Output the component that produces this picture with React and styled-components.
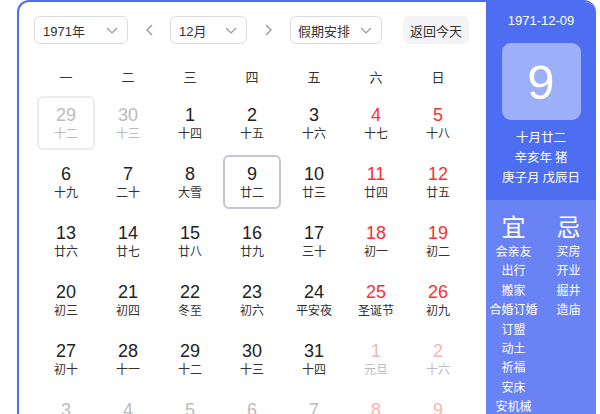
import React from "react";
import styled, { createGlobalStyle } from "styled-components";

const GlobalStyle = createGlobalStyle`
  html, body {
    margin: 0;
    padding: 0;
    background: #fff;
    overflow: hidden;
  }
  body {
    font-family: "Liberation Sans", Arial, "Noto Sans CJK SC", sans-serif;
  }
`;

const blue = "#4e6ef2";
const red = "#f73131";

const Page = styled.div`
  padding-left: 17px;
`;

const Card = styled.div`
  box-sizing: border-box;
  width: 579px;
  height: 440px;
  border: 2px solid ${blue};
  border-right: 0;
  border-radius: 12px 12px 0 0;
  overflow: hidden;
  display: flex;
`;

const Main = styled.div`
  flex: 1;
  padding: 14px 17px 0 16px;
`;

const Toolbar = styled.div`
  display: flex;
  align-items: center;
  height: 28px;
  margin-left: -1px;
`;

const Select = styled.div`
  box-sizing: border-box;
  width: ${(p) => p.$w}px;
  height: 28px;
  border: 1px solid #d9dbe2;
  border-radius: 6px;
  display: flex;
  align-items: center;
  justify-content: space-between;
  padding: 0 9px 0 ${(p) => p.$pl || 8}px;
  font-size: 13px;
  color: #333;
  font-family: "Liberation Sans", "Noto Sans CJK SC", sans-serif;
`;

const Nav = styled.div`
  width: ${(p) => p.$w}px;
  display: flex;
  justify-content: center;
  align-items: center;
`;

const TodayButton = styled.div`
  margin-left: auto;
  height: 28px;
  width: 66px;
  border-radius: 6px;
  background: #f3f4f6;
  display: flex;
  align-items: center;
  justify-content: center;
  font-size: 13px;
  color: #333;
  font-family: "Noto Sans CJK SC", sans-serif;
`;

const WeekHeader = styled.div`
  display: grid;
  grid-template-columns: repeat(7, 62px);
  margin: 23px 0 9px;
  line-height: 20px;
  font-size: 13px;
  color: #333;
  text-align: center;
  font-family: "Noto Sans CJK SC", sans-serif;
`;

const Grid = styled.div`
  display: grid;
  grid-template-columns: repeat(7, 62px);
  grid-auto-rows: 54px;
  row-gap: 5px;
`;

const Cell = styled.div`
  box-sizing: border-box;
  width: 58px;
  height: 54px;
  justify-self: center;
  border-radius: 6px;
  border: 2px solid
    ${(p) => (p.$mode === "selected" ? "#c3c6d0" : p.$mode === "hover" ? "#ececee" : "transparent")};
  display: flex;
  flex-direction: column;
  align-items: center;
  padding-top: 7px;
`;

const Day = styled.div`
  font-size: 18px;
  line-height: 20px;
  color: ${(p) => p.$color};
  font-family: "Liberation Sans", Arial, sans-serif;
`;

const Lunar = styled.div`
  font-size: 12px;
  line-height: 16px;
  color: ${(p) => p.$color};
  font-family: "Noto Sans CJK SC", sans-serif;
`;

const Panel = styled.div`
  width: 110px;
  display: flex;
  flex-direction: column;
  color: #fff;
  font-family: "Noto Sans CJK SC", sans-serif;
`;

const PanelTop = styled.div`
  height: 198px;
  background: ${blue};
  display: flex;
  flex-direction: column;
  align-items: center;
  padding-top: 10px;
  box-sizing: border-box;
`;

const DateText = styled.div`
  font-size: 13px;
  line-height: 17px;
  font-family: "Liberation Sans", Arial, sans-serif;
`;

const BigDay = styled.div`
  margin-top: 14px;
  width: 79px;
  height: 77px;
  border-radius: 9px;
  background: rgba(255, 255, 255, 0.45);
  display: flex;
  align-items: center;
  justify-content: center;
  font-size: 49px;
  font-family: "Liberation Sans", Arial, sans-serif;
`;

const LunarInfo = styled.div`
  margin-top: 7px;
  font-size: 12.5px;
  line-height: 20px;
  text-align: center;
`;

const PanelBottom = styled.div`
  flex: 1;
  background: #6a83f4;
  display: flex;
  padding-top: 11px;
`;

const Column = styled.div`
  width: 55px;
  display: flex;
  flex-direction: column;
  align-items: center;
`;

const ColumnTitle = styled.div`
  font-size: 24px;
  line-height: 30px;
`;

const Item = styled.div`
  font-size: 12px;
  line-height: 19.4px;
  white-space: nowrap;
`;

const ChevronDown = () => (
  <svg width="12" height="7" viewBox="0 0 12 7">
    <polyline points="1,1 6,6 11,1" fill="none" stroke="#999" strokeWidth="1.2" />
  </svg>
);

const Arrow = ({ dir }) => (
  <svg width="8" height="12" viewBox="0 0 8 12">
    <polyline
      points={dir === "left" ? "7,1 2,6 7,11" : "1,1 6,6 1,11"}
      fill="none"
      stroke="#999"
      strokeWidth="1.4"
    />
  </svg>
);

const weekdays = ["一", "二", "三", "四", "五", "六", "日"];

// [day, lunar, otherMonth, mode]
const days = [
  [29, "十二", true, "hover"], [30, "十三", true], [1, "十四"], [2, "十五"], [3, "十六"], [4, "十七"], [5, "十八"],
  [6, "十九"], [7, "二十"], [8, "大雪"], [9, "廿二", false, "selected"], [10, "廿三"], [11, "廿四"], [12, "廿五"],
  [13, "廿六"], [14, "廿七"], [15, "廿八"], [16, "廿九"], [17, "三十"], [18, "初一"], [19, "初二"],
  [20, "初三"], [21, "初四"], [22, "冬至"], [23, "初六"], [24, "平安夜"], [25, "圣诞节"], [26, "初九"],
  [27, "初十"], [28, "十一"], [29, "十二"], [30, "十三"], [31, "十四"], [1, "元旦", true], [2, "十六", true],
  [3, "十七", true], [4, "十八", true], [5, "十九", true], [6, "小寒", true], [7, "廿一", true], [8, "廿二", true], [9, "廿三", true],
];

const good = ["会亲友", "出行", "搬家", "合婚订婚", "订盟", "动土", "祈福", "安床", "安机械"];
const bad = ["买房", "开业", "掘井", "造庙"];

const dayColor = (weekend, other) => {
  if (other) return weekend ? "#f8b4b4" : "#bbbbbb";
  return weekend ? red : "#222";
};

export default function App() {
  return (
    <Page>
      <GlobalStyle />
      <Card>
        <Main>
          <Toolbar>
            <Select $w={94}>
              1971年
              <ChevronDown />
            </Select>
            <Nav $w={42}>
              <Arrow dir="left" />
            </Nav>
            <Select $w={77}>
              12月
              <ChevronDown />
            </Select>
            <Nav $w={43}>
              <Arrow dir="right" />
            </Nav>
            <Select $w={92} $pl={7}>
              假期安排
              <ChevronDown />
            </Select>
            <TodayButton>返回今天</TodayButton>
          </Toolbar>
          <WeekHeader>
            {weekdays.map((w) => (
              <div key={w}>{w}</div>
            ))}
          </WeekHeader>
          <Grid>
            {days.map(([d, l, other, mode], i) => {
              const weekend = i % 7 >= 5;
              return (
                <Cell key={i} $mode={mode}>
                  <Day $color={dayColor(weekend, other)}>{d}</Day>
                  <Lunar $color={other ? "#bbbbbb" : "#333"}>{l}</Lunar>
                </Cell>
              );
            })}
          </Grid>
        </Main>
        <Panel>
          <PanelTop>
            <DateText>1971-12-09</DateText>
            <BigDay>9</BigDay>
            <LunarInfo>
              <div>十月廿二</div>
              <div>辛亥年 猪</div>
              <div>庚子月 戊辰日</div>
            </LunarInfo>
          </PanelTop>
          <PanelBottom>
            <Column>
              <ColumnTitle>宜</ColumnTitle>
              {good.map((g) => (
                <Item key={g}>{g}</Item>
              ))}
            </Column>
            <Column>
              <ColumnTitle>忌</ColumnTitle>
              {bad.map((g) => (
                <Item key={g}>{g}</Item>
              ))}
            </Column>
          </PanelBottom>
        </Panel>
      </Card>
    </Page>
  );
}
